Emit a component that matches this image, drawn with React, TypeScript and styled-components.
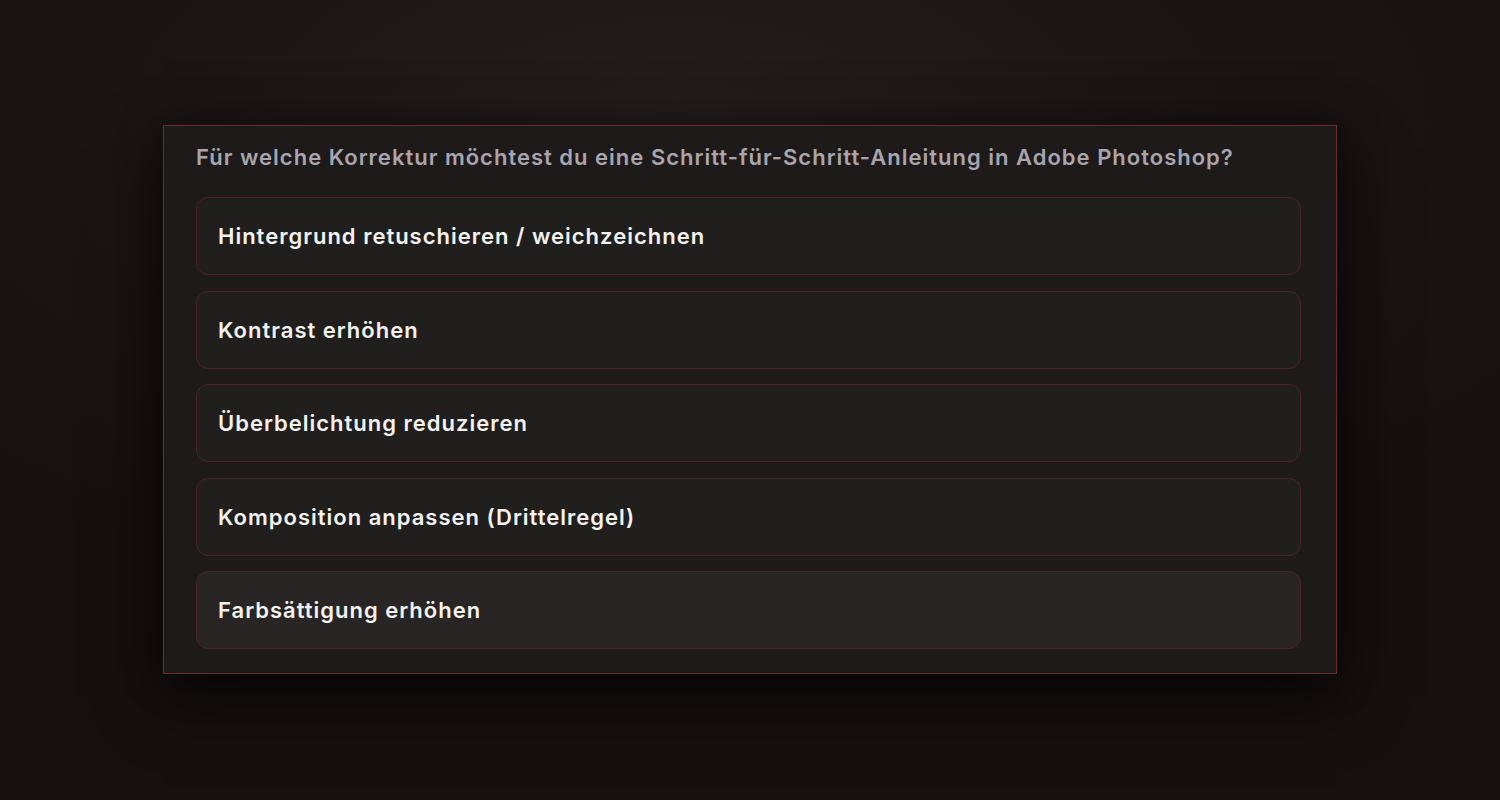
import React from "react";
import styled, { createGlobalStyle } from "styled-components";

const Global = createGlobalStyle`
  html, body { margin: 0; padding: 0; }
  body {
    background: radial-gradient(ellipse 70% 60% at 45% 15%, #241d1d 0%, #1b1314 55%, #170f10 100%);
    font-family: Inter, "Noto Sans", sans-serif;
    -webkit-font-smoothing: antialiased;
  }
`;

const Page = styled.div`
  width: 100vw;
  height: 100vh;
  display: flex;
  align-items: center;
  justify-content: center;
`;

const Card = styled.section`
  box-sizing: border-box;
  width: 1174px;
  height: 549px;
  margin-top: -1px;
  background: #1d1a19;
  border: 1px solid #6a2d36;
  padding: 18px 35px 23px 32px;
  box-shadow: 0 24px 60px rgba(0, 0, 0, 0.55), 0 0 40px rgba(0, 0, 0, 0.35);
  display: flex;
  flex-direction: column;
`;

const Question = styled.h2`
  margin: 0 0 27px 0;
  font-size: 22px;
  line-height: 26px;
  font-weight: 600;
  color: #a9a5ae;
  letter-spacing: 1px;
  white-space: nowrap;
`;

const Options = styled.div`
  display: flex;
  flex-direction: column;
  gap: 15.5px;
`;

const Option = styled.button<{ $active?: boolean }>`
  box-sizing: border-box;
  height: 78px;
  display: flex;
  align-items: center;
  padding: 0 21px;
  border-radius: 12px;
  border: 1px solid #4b2329;
  background: ${(p) => (p.$active ? "#292524" : "#211f1e")};
  color: #f4f2f1;
  font-family: Inter, "Noto Sans", sans-serif;
  font-size: 22px;
  font-weight: 600;
  letter-spacing: 1px;
  text-align: left;
  cursor: pointer;
`;

const items = [
  "Hintergrund retuschieren / weichzeichnen",
  "Kontrast erhöhen",
  "Überbelichtung reduzieren",
  "Komposition anpassen (Drittelregel)",
  "Farbsättigung erhöhen",
];

export default function App() {
  return (
    <>
      <Global />
      <Page>
        <Card>
          <Question>
            Für welche Korrektur möchtest du eine Schritt-für-Schritt-Anleitung in Adobe Photoshop?
          </Question>
          <Options>
            {items.map((t, i) => (
              <Option key={t} $active={i === items.length - 1}>
                {t}
              </Option>
            ))}
          </Options>
        </Card>
      </Page>
    </>
  );
}
